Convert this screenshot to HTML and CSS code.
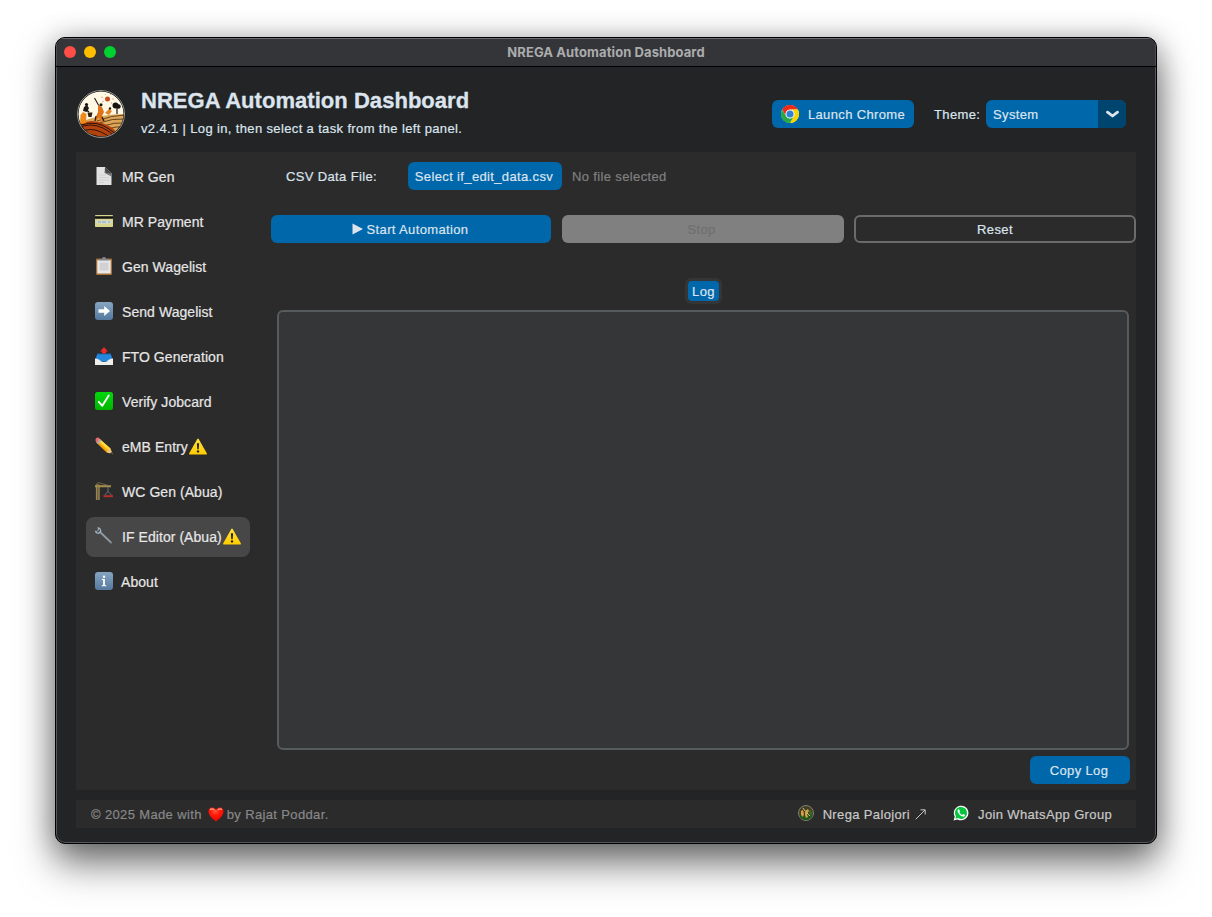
FILE: index.html
```
<!DOCTYPE html>
<html lang="en">
<head>
<meta charset="utf-8">
<title>NREGA Automation Dashboard</title>
<link rel="stylesheet" href="styles.css">
</head>
<body>
<svg class="defs" aria-hidden="true">
  <defs>
    <linearGradient id="steel" x1="0" y1="0" x2="0" y2="1"><stop offset="0" stop-color="#86a5c2"/><stop offset="1" stop-color="#557a9e"/></linearGradient>
    <linearGradient id="green" x1="0" y1="0" x2="0" y2="1"><stop offset="0" stop-color="#00d80c"/><stop offset="1" stop-color="#00b500"/></linearGradient>
    <linearGradient id="yellow" x1="0" y1="0" x2="0" y2="1"><stop offset="0" stop-color="#ffe23a"/><stop offset="1" stop-color="#ffcc00"/></linearGradient>
    <radialGradient id="red" cx=".45" cy=".25" r=".8"><stop offset="0" stop-color="#ff5a3c"/><stop offset=".4" stop-color="#ff1a08"/><stop offset="1" stop-color="#e40000"/></radialGradient>
    <symbol id="warn" viewBox="0 0 18 18"><path d="M8.300 1q.7-1 1.400 0l8.200 14.600q.3.800-.5.900H.6q-.8-.1-.5-.9z" fill="url(#yellow)"/><path d="M7.900 5.200h2.200l-.4 6H8.300z" fill="#222"/><circle cx="9" cy="13.400" r="1.200" fill="#222"/></symbol>
  </defs>
</svg>
<div class="window">
  <div class="titlebar">
    <div class="lights"><i class="red"></i><i class="amber"></i><i class="green"></i></div>
    <span class="wtitle">NREGA Automation Dashboard</span>
  </div>
  <header class="header">
    <svg class="logo" viewBox="0 0 48 48">
      <clipPath id="disc"><circle cx="24" cy="24" r="23"/></clipPath>
      <g clip-path="url(#disc)">
        <path fill="#fff8e4" d="M0 0h48v48H0z"/>
        <circle cx="30.500" cy="9" r="2.500" fill="#c94a20"/>
        <path d="M24 7l2 .5M25 12l2-1M28 4l.5 1M34 4l-1 1M37 9h-2M35 14l-1-2" stroke="#e6a183" stroke-width=".8"/>
        <path d="M0 34q18-10 48-10v24H0z" fill="#dca656"/>
        <path d="M20 31q15-6 28-6M22 33q14-5 26-4M26 36q12-4 22-3M30 39q10-3 18-2" stroke="#4a2a14" stroke-width=".8" fill="none"/>
        <path d="M0 35q12-7 25-2 14 4 18 15H0z" fill="#b2430f"/>
        <path d="M1 38q12-6 25 0 9 4 12 10M3 42q11-5 21 0 7 3 9 6M8 46q8-3 16 2M4 35q16-5 28 4 8 5 10 9" stroke="#32140b" stroke-width="1" fill="none"/>
        <circle cx="38.500" cy="15.500" r="3" fill="#171513"/><circle cx="41.500" cy="16.500" r="2.200" fill="#171513"/><path d="M40 17v7" stroke="#171513" stroke-width="1.200"/>
        <path d="M3.500 25l2.500-3 3.500 2-.5 9-6 1z" fill="#ed8b1c"/><path d="M6 21l1-4 3-2 2 3-2 4z" fill="#211b17"/><path d="M7 18l5 4" stroke="#171513" stroke-width="1.200"/><circle cx="9.500" cy="14.500" r="1.600" fill="#171513"/>
        <path d="M10.500 22.500h5l-1 4.500h-3z" fill="#33210f"/>
        <path d="M17.500 8l4.500 8" stroke="#2a1a10" stroke-width="1.100"/><path d="M21 15l4 2 2 5-2 4 2 5-3 1-2-5-3 4-1-2 3-7z" fill="#dd7218"/><circle cx="24" cy="14.700" r="1.500" fill="#171513"/><path d="M19 26l-1 5M25 27l2 4" stroke="#1c130e" stroke-width="1.200"/>
        <path d="M28 23l4-4 3 2-3 4z" fill="#e48322"/><circle cx="33" cy="18.500" r="1.200" fill="#2a180e"/>
      </g>
      <circle cx="24" cy="24" r="23.200" fill="none" stroke="#111" stroke-width="1.400"/><circle cx="24" cy="24" r="23.500" fill="none" stroke="#b9b9b4" stroke-width=".8"/>
    </svg>
    <div class="heading">
      <h1>NREGA Automation Dashboard</h1>
      <p>v2.4.1 | Log in, then select a task from the left panel.</p>
    </div>
    <button class="btn launch">
      <svg class="i18" viewBox="0 0 18 18"><circle cx="9" cy="9" r="9" fill="#fff"/><path d="M1.200 4.500A9 9 0 0 1 16.800 4.500H9A4.500 4.500 0 0 0 5.100 11.250z" fill="#ee2a18"/><path d="M16.800 4.500A9 9 0 0 1 9 18l3.900-6.750A4.500 4.500 0 0 0 9 4.500z" fill="#fbd400"/><path d="M9 18A9 9 0 0 1 1.200 4.500l3.900 6.750a4.500 4.500 0 0 0 7.800 0z" fill="#29a645"/><circle cx="9" cy="9" r="4.200" fill="#e6eef5"/><circle cx="9" cy="9" r="3.500" fill="#3281d5"/></svg>
      <span>Launch Chrome</span>
    </button>
    <span class="theme-label">Theme:</span>
    <div class="select"><span>System</span><div class="arrow"><svg width="14" height="10" viewBox="0 0 14 10"><path d="M2.500 3.200L7.500 7l5-3.800" fill="none" stroke="#dce4ee" stroke-width="2.800" stroke-linecap="round" stroke-linejoin="round"/></svg></div></div>
  </header>
  <main class="main">
    <nav class="side">
      <a class="item"><svg class="i18" viewBox="0 0 18 18"><path d="M1.500 0H10l6.500 6.500V18h-15z" fill="#e2e2e2"/><path d="M10 0l6.500 6.500V9.500L9.500 6z" fill="#777"/><path d="M10 0l6.500 6.500-6-1z" fill="#444"/><path d="M4 8h7M4 10.500h10M4 13h10M4 15.500h5" stroke="#cdcdcd" stroke-width=".8"/></svg><span>MR Gen</span></a>
      <a class="item"><svg class="i18" viewBox="0 0 18 18"><rect y="3" width="18" height="12" rx=".8" fill="#d8d68c"/><path d="M0 4.200h18v2.600H0z" fill="#111"/><path d="M2 8.500h14v3H2z" fill="#d1dce0"/><path d="M3 10h3M7 10h4M13 10h2" stroke="#7f9fba"/></svg><span>MR Payment</span></a>
      <a class="item"><svg class="i18" viewBox="0 0 18 18"><rect x="1" y="1.500" width="16" height="16.500" rx="1" fill="#a76e35"/><path d="M2.300 3.200h13.400v13.300H2.300z" fill="#e9e9eb"/><path d="M4.500 5.500h9v8h-9z" fill="#d1d1d3"/><path d="M4 3.500V2h3q0-2 2-2t2 2h3v1.500z" fill="#858b96"/></svg><span>Gen Wagelist</span></a>
      <a class="item"><svg class="i18" viewBox="0 0 18 18"><rect width="18" height="18" rx="3" fill="url(#steel)"/><path d="M3.500 7.200h5.700V4.100l5.800 4.900-5.800 4.900v-3.100H3.500z" fill="#fff"/></svg><span>Send Wagelist</span></a>
      <a class="item"><svg class="i18" viewBox="0 0 18 18"><path d="M2.200 6.500h13.600l2 6H.2z" fill="#1767b0"/><path d="M2.500 7.500h13l1.500 4-3 1-1.500 2h-7L4 12.500l-3-1z" fill="#2588dc"/><path d="M0 11.500q2 0 4.500 1.200 1 2.300 4.500 2.300t4.500-2.300q2.500-1.200 4.500-1.200V18H0z" fill="#eeeeed"/><path d="M9 0l4 4.500h-2V6.500H7v-2H5z" fill="#e82c28"/></svg><span>FTO Generation</span></a>
      <a class="item"><svg class="i18" viewBox="0 0 18 18"><rect width="18" height="18" rx="2.500" fill="url(#green)"/><path d="M3.800 9.800l3.500 4 6.400-10.300" fill="none" stroke="#fff" stroke-width="1.900" stroke-linecap="round" stroke-linejoin="round"/></svg><span>Verify Jobcard</span></a>
      <a class="item"><svg class="i18" viewBox="0 0 18 18"><path d="M4.500 1.700l10.700 9.500 2.200 5.600-5.800-1.500L1.500 5.500z" fill="#ffbd13"/><path d="M5.200 2.400l10 8.800-1.500 1.800L3.200 3.800z" fill="#ffda42"/><path d="M1.500 5.500l1.200-1.400 10 9.900-1.100 1.300z" fill="#f4a00b"/><path d="M15.200 11.200l2.500 6-6.100-1.900z" fill="#edc48a"/><path d="M16.500 15l1.300 2.500-3-1z" fill="#333"/><path d="M4.800 2L1.700 5.700l1.600 1.500 3.200-3.700z" fill="#a9adb2"/><path d="M4.800 2Q3.500-.2 1.400 1-.7 3 1.700 5.700z" fill="#ee6977"/></svg><span>eMB Entry</span><svg class="warn"><use href="#warn"/></svg></a>
      <a class="item"><svg class="i18" viewBox="0 0 18 18"><path d="M1 2h3.500v16H1z" fill="#675b3c"/><path d="M1.500 3v15M4 3v15" stroke="#9a8653" stroke-width="1.200"/><path d="M0 4.200h16" stroke="#a18a4c" stroke-width="2.200"/><path d="M0 4l3-3.500L15 4" fill="none" stroke="#82734c" stroke-width=".8"/><path d="M13 5v5M13 9.500l-3.500 4M13 9.500l4 4" stroke="#81868b" stroke-width=".7" fill="none"/><path d="M8.500 13.200H18v2H8.500z" fill="#b3302c"/></svg><span>WC Gen (Abua)</span></a>
      <a class="item active"><svg class="i18" viewBox="0 0 18 18"><path d="M5 5l11 10.500" stroke="#7a8087" stroke-width="2.400" stroke-linecap="round"/><path d="M5 5l10.500 10" stroke="#aeb9c2" stroke-width=".8"/><path d="M3.400.9a2.900 2.900 0 0 1-2.800 3.500 2.800 2.800 0 0 0 4.700.9A3 3 0 0 0 3.400.9z" fill="none" stroke="#9db0bf" stroke-width="1.300"/><path d="M.2.2l3 3L1.300 3.900z" fill="#4a4a4a"/></svg><span>IF Editor (Abua)</span><svg class="warn"><use href="#warn"/></svg></a>
      <a class="item about"><svg class="i18" viewBox="0 0 18 18"><rect width="18" height="18" rx="3" fill="url(#steel)"/><circle cx="9" cy="4.700" r="1.200" fill="#fff"/><path d="M6.800 7h3.100v6.300h1.400v.9h-4.600v-.9h1.400V7.900H6.800z" fill="#fff"/></svg><span>About</span></a>
    </nav>
    <section class="pane">
      <div class="file-row"><span class="csv">CSV Data File:</span><button class="btn pick">Select if_edit_data.csv</button><span class="none">No file selected</span></div>
      <div class="actions"><button class="btn start"><svg width="11" height="12" viewBox="0 0 11 12"><path d="M.5.5L11 6 .5 11.500z" fill="#dce4ee"/></svg><span>Start Automation</span></button><button class="btn stop">Stop</button><button class="btn reset">Reset</button></div>
      <div class="tabs"><span>Log</span></div>
      <div class="log"></div>
      <button class="btn copy">Copy Log</button>
    </section>
  </main>
  <footer class="footer">
    <span class="made">© 2025 Made with</span>
    <svg class="heart" viewBox="0 0 16 15"><path d="M8 14.500C4 11.500.5 8 .5 4.500.5 2 2.200.5 4.300.5 6 .5 7.300 1.500 8 3 8.700 1.500 10 .5 11.700.5c2.100 0 3.800 1.500 3.800 4 0 3.500-3.500 7-7.500 10z" fill="url(#red)"/><path d="M2 2.700q2-1.700 4 .2M10 2.900q2-1.900 4-.2" stroke="#ff9a84" stroke-width="1.200" fill="none"/></svg>
    <span class="made">by Rajat Poddar.</span>
    <svg class="i16 pal" viewBox="0 0 16 16"><circle cx="8" cy="8" r="7.500" fill="#423d23" stroke="#969681" stroke-width=".8"/><path d="M1.500 11q6-3 13 0-2 4-6.500 4t-6.500-4z" fill="#20571d"/><path d="M12 4l2 4-1 3-2-3z" fill="#317327"/><path d="M3 6l2-1 1 4-1 3-2-2zM7 6l3-2 1 2-2 3 1 3-2 1-1-3z" fill="#d8a044"/><path d="M5 3l2 3M9 8l3 3" stroke="#efe0aa" stroke-width=".8"/></svg>
    <span class="link nrega">Nrega Palojori</span>
    <svg class="ne" width="11" height="11" viewBox="0 0 11 11"><path d="M.7 10.300L10 1M5.500.8h4.700v4.700" fill="none" stroke="#c8c8c8" stroke-width="1"/></svg>
    <svg class="i16 wa" viewBox="0 0 16 16"><path d="M.6 15.500l1.100-4A7.300 7.300 0 1 1 4.600 14.400z" fill="#fff"/><path d="M2.300 13.800l.7-2.500A6 6 0 1 1 4.900 13.100z" fill="#05c43f"/><path d="M5.400 4.300c-.8.500-1.100 1.500-.6 2.700.9 2.200 2.900 4 5 4.600 1.200.2 2.100-.4 2.300-1.600l-2-1-.9 1c-1.200-.5-2.300-1.500-2.900-2.700l.7-.9-.8-2z" fill="#fff"/></svg>
    <span class="link join">Join WhatsApp Group</span>
  </footer>
</div>
</body>
</html>
```
FILE: styles.css
```
* { box-sizing: border-box; }
html { background: #fff; }
body {
  margin: 0;
  height: 917px;
  padding: 37px 55px;
  overflow: hidden;
  font-family: "Liberation Sans", Arial, sans-serif;
  font-size: 13px;
  letter-spacing: .36px;
  color: #dce4ee;
  -webkit-text-stroke: .2px currentColor;
}
svg { display: block; flex: none; }
span { white-space: nowrap; }
.defs { position: absolute; width: 0; height: 0; }
.window {
  width: 1102px;
  height: 807px;
  border: 1px solid #000;
  border-radius: 10px;
  background: #222426;
  overflow: hidden;
  box-shadow: inset 0 0 0 1px #55575a, 0 20px 38px rgba(0, 0, 0, .52), 0 2px 28px rgba(0, 0, 0, .27);
}
.titlebar {
  position: relative;
  display: flex;
  align-items: center;
  justify-content: center;
  height: 29px;
  background: #343538;
  border-bottom: 1px solid #000;
  box-shadow: inset 0 1px #6b6c6e, inset 1px 0 #4d4e51, inset -1px 0 #4d4e51;
}
.lights { position: absolute; left: 8px; top: 8px; display: flex; gap: 8px; }
.lights i { width: 12px; height: 12px; border-radius: 50%; }
.lights .red { background: #ff4d47; }
.lights .amber { background: #ffbd00; }
.lights .green { background: #00d12f; }
.wtitle { padding-bottom: 1px; font: 700 13px/16px Inter, sans-serif; letter-spacing: .09px; color: #abacae; -webkit-text-stroke: 0; }
.header { display: flex; align-items: center; height: 85px; padding: 9px 30px 0 21px; }
.logo { width: 48px; height: 48px; }
.heading { width: 631px; margin: 0 0 0 16px; padding-bottom: 3px; }
h1 { margin: 0; font-size: 22px; line-height: 28px; letter-spacing: .04px; -webkit-text-stroke: .3px currentColor; }
p { margin: 0; line-height: 18px; padding-top: 5px; }
.btn {
  display: flex;
  align-items: center;
  justify-content: center;
  height: 28px;
  padding: 0 2px 0 0;
  border: 0;
  border-radius: 6px;
  background: #0067aa;
  color: #dce4ee;
  font: inherit;
  letter-spacing: inherit;
  white-space: nowrap;
}
.i18 { width: 18px; height: 18px; }
.i16 { width: 16px; height: 16px; }
.launch { width: 142px; gap: 9px; padding: 0; }
.theme-label { width: 52px; margin-left: 20px; }
.select { display: flex; justify-content: space-between; align-items: center; width: 140px; height: 28px; padding-left: 7px; border-radius: 6px; background: #0067aa; overflow: hidden; }
.arrow { display: flex; align-items: center; justify-content: center; width: 28px; height: 28px; background: #00456f; }
.main { display: flex; width: 1060px; height: 638px; margin-left: 20px; background: #2b2b2b; }
.side { display: flex; flex-direction: column; gap: 5px; width: 195px; padding: 5px 0 0 10px; }
.item { display: flex; align-items: center; width: 164px; height: 40px; padding-left: 9px; border-radius: 8px; color: #e6e6e6; font-size: 14px; letter-spacing: .06px; }
.item .i18 { margin: 0 9px 2px 0; }
.about .i18 { margin-right: 8px; }
.item .warn { width: 18px; height: 18px; margin: 0 0 1px 1px; }
.active { background: #474747; }
.pane { display: flex; flex-direction: column; width: 865px; }
.file-row { display: flex; align-items: center; height: 28px; margin-top: 10px; padding-left: 15px; }
.csv { width: 122px; }
.pick { width: 154px; }
.none { margin-left: 10px; color: #808080; }
.actions { display: grid; grid-template-columns: 280px 282px 282px; column-gap: 10.500px; margin-top: 25px; }
.start { gap: 4px; }
.stop { background: #808080; color: #6f6f6f; }
.reset { padding: 0; border: 2px solid #6b6b6b; background: none; }
.tabs { align-self: center; width: 37px; height: 26px; margin-top: 35px; padding: 3px; border-radius: 6px; background: #343536; }
.tabs span { display: block; height: 20px; border-radius: 4px; background: #0067aa; text-align: center; line-height: 22px; }
.log { width: 852px; height: 440px; margin: 6px 0 0 6px; border: 2px solid #565b5e; border-radius: 6px; background: #343638; }
.copy { width: 100px; margin: 6px 6px 0 auto; }
.footer { display: flex; align-items: center; width: 1060px; height: 28px; margin: 10px 0 0 20px; padding-left: 15px; background: #2b2b2b; }
.made { color: #888; }
.heart { width: 16px; height: 15px; margin: 0 3px 0 6px; }
.link { color: #c8c8c8; }
.pal { margin: 0 9px 2px 469px; }
.ne { margin-left: 5px; }
.wa { margin: 0 9px 2px 27px; }
```
